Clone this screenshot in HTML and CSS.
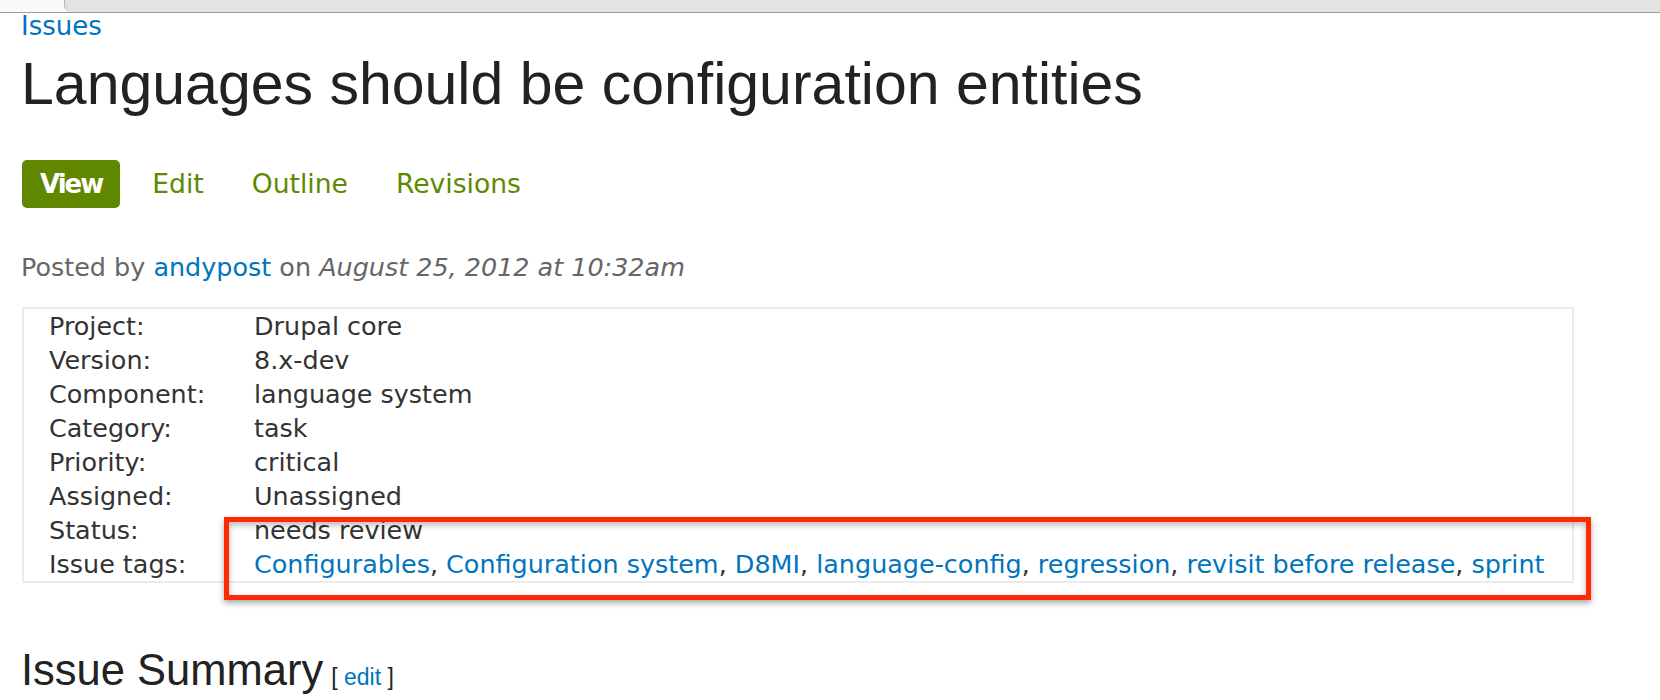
FILE: index.html
```html
<!DOCTYPE html>
<html lang="en">
<head>
<meta charset="utf-8">
<title>Languages should be configuration entities</title>
<link rel="stylesheet" href="styles.css">
</head>
<body>
<div class="chrome"><div class="chrome-tab"></div></div>
<main class="page">
  <a class="crumb" href="#">Issues</a>
  <h1 class="title">Languages should be configuration entities</h1>
  <ul class="tabs">
    <li><a class="tab active" href="#">View</a></li>
    <li><a class="tab" href="#">Edit</a></li>
    <li><a class="tab" href="#">Outline</a></li>
    <li><a class="tab" href="#">Revisions</a></li>
  </ul>
  <p class="submitted">Posted by <a href="#">andypost</a> on <em>August 25, 2012 at 10:32am</em></p>
  <div class="meta">
    <div class="label">Project:</div><div class="value">Drupal core</div>
    <div class="label">Version:</div><div class="value">8.x-dev</div>
    <div class="label">Component:</div><div class="value">language system</div>
    <div class="label">Category:</div><div class="value">task</div>
    <div class="label">Priority:</div><div class="value">critical</div>
    <div class="label">Assigned:</div><div class="value">Unassigned</div>
    <div class="label">Status:</div><div class="value">needs review</div>
    <div class="label">Issue tags:</div>
    <div class="value"><a href="#">Configurables</a>, <a href="#">Configuration system</a>, <a href="#">D8MI</a>, <a href="#">language-config</a>, <a href="#">regression</a>, <a href="#">revisit before release</a>, <a href="#">sprint</a></div>
    <div class="annotation"></div>
  </div>
  <h2 class="section">Issue Summary<span class="edit">[ <a href="#">edit</a> ]</span></h2>
</main>
</body>
</html>
```
FILE: styles.css
```css
html, body {
  margin: 0;
  padding: 0;
  background: #fff;
}

body {
  font-family: "DejaVu Sans", Verdana, sans-serif;
  color: #333;
}

a {
  text-decoration: none;
  color: #0074bd;
}

.chrome {
  display: flex;
  height: 12px;
  border-bottom: 1px solid #9c9c9c;
  background: #fafafa;
}

.chrome-tab {
  flex: 1;
  margin-left: 64px;
  background: #e3e3e3;
  border-left: 1px solid #b5b5b5;
  border-bottom-left-radius: 7px;
}

.page {
  padding: 0 0 0 21px;
}

.crumb {
  display: block;
  font-size: 26px;
  line-height: 26px;
}

.title {
  margin: 12px 0 0 0;
  font-family: "Liberation Sans", Arial, sans-serif;
  font-weight: normal;
  font-size: 59px;
  line-height: 66px;
  color: #222;
}

.tabs {
  display: flex;
  gap: 14px;
  list-style: none;
  margin: 43px 0 0 1px;
  padding: 0;
}

.tab {
  display: block;
  height: 48px;
  padding: 0 16px 0 18px;
  font-size: 26.6px;
  line-height: 48px;
  color: #5f8900;
  border-radius: 5px;
}

.tab.active {
  background: #5f8800;
  color: #fff;
  font-weight: bold;
  font-size: 26px;
  letter-spacing: -2px;
  padding-right: 18px;
}

.submitted {
  margin: 44px 0 0 0;
  font-size: 25.45px;
  line-height: 30px;
  color: #666;
}

.submitted em {
  font-style: italic;
}

.meta {
  position: relative;
  box-sizing: border-box;
  width: 1552px;
  margin: 25px 0 0 1px;
  padding: 0 0 0 25px;
  border: 2px solid #ebebeb;
  display: grid;
  grid-template-columns: 205px 1fr;
  font-size: 25.45px;
  line-height: 34px;
  color: #333;
}

.label,
.value {
  white-space: nowrap;
}

.annotation {
  position: absolute;
  left: 200px;
  top: 208px;
  box-sizing: border-box;
  width: 1367px;
  height: 83px;
  border: 5px solid #ff2a00;
  box-shadow: 0 3px 6px rgba(0, 0, 0, 0.35), inset 0 3px 6px rgba(0, 0, 0, 0.28);
  pointer-events: none;
}

.section {
  margin: 63px 0 0 0;
  font-family: "Liberation Sans", Arial, sans-serif;
  font-weight: normal;
  font-size: 43.5px;
  line-height: 49px;
  color: #222;
}

.edit {
  margin-left: 8px;
  font-size: 23px;
  color: #222;
}
```
